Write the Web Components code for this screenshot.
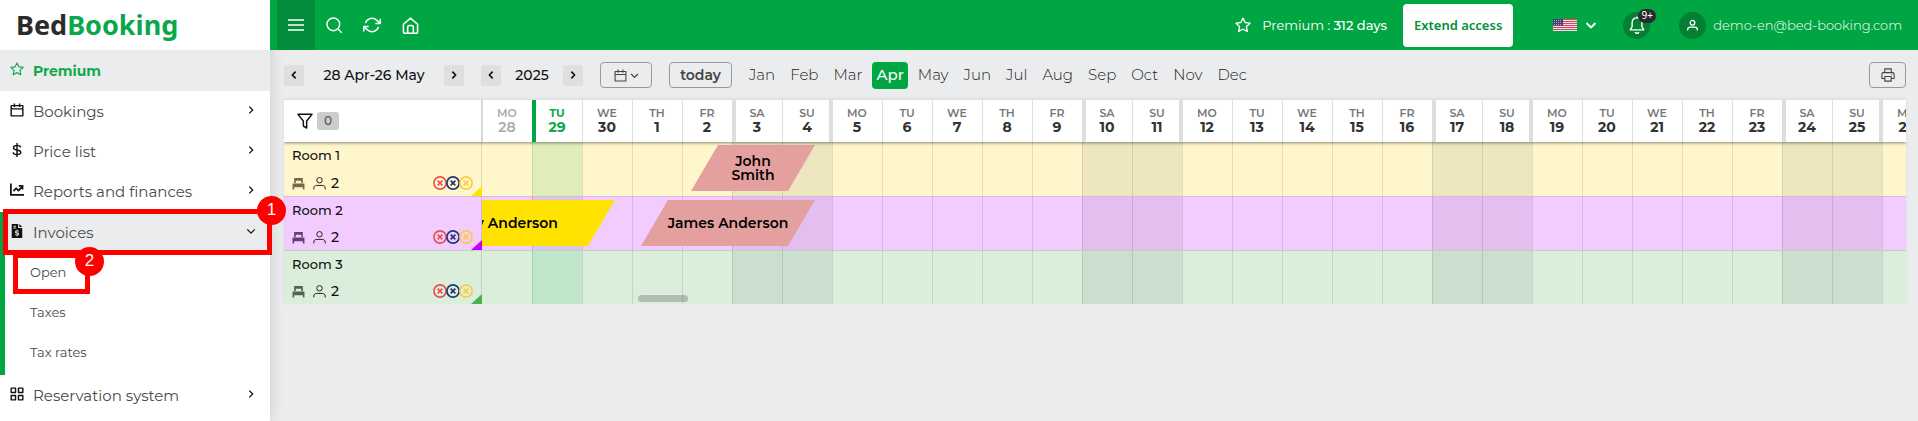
<!DOCTYPE html>
<html lang="en">
<head>
<meta charset="utf-8">
<meta name="viewport" content="width=device-width, initial-scale=1">
<title>BedBooking</title>
<style>
  body { margin: 0; background: #ebecee; font-family: Montserrat, Inter, "Noto Sans", sans-serif; color: #111; }
</style>
</head>
<body>
<app-shell>
  <side-nav slot="nav">
    <nav-item icon="star" tone="premium">Premium</nav-item>
    <nav-item icon="calendar" arrow="right">Bookings</nav-item>
    <nav-item icon="dollar" arrow="right">Price list</nav-item>
    <nav-item icon="chart" arrow="right">Reports and finances</nav-item>
    <nav-group>
      <nav-item icon="invoice" arrow="down" tone="active">Invoices<step-mark slot="mark" kind="row">1</step-mark></nav-item>
      <nav-item tone="sub">Open<step-mark slot="mark" kind="word">2</step-mark></nav-item>
      <nav-item tone="sub">Taxes</nav-item>
      <nav-item tone="sub">Tax rates</nav-item>
    </nav-group>
    <nav-item icon="grid" arrow="right">Reservation system</nav-item>
  </side-nav>
  <top-bar slot="top"></top-bar>
  <date-toolbar slot="tools"></date-toolbar>
  <booking-calendar>
    <room-row label="Room 1" tone="yellow">
      <booking-bar start="4.18" span="2.48">John Smith</booking-bar>
    </room-row>
    <room-row label="Room 2" tone="purple">
      <booking-bar start="-1.82" span="4.48" tone="yellow">Mary Anderson</booking-bar>
      <booking-bar start="3.18" span="3.48">James Anderson</booking-bar>
    </room-row>
    <room-row label="Room 3" tone="green"></room-row>
  </booking-calendar>
</app-shell>

<script>
const ICONS = {
  star: '<path d="M12 1.500l3.200 6.800 7.300 1-5.300 5 1.300 7.500-6.500-3.600-6.500 3.600 1.300-7.500-5.300-5 7.300-1z"/>',
  calendar: '<path d="M2 4.500h20v17.500H2zM2 10h20M7.500 1v6M16.500 1v6"/>',
  dollar: '<path d="M12 0v24M18 7.500C18 5 15.500 4 12 4S6 5.200 6 8s2.500 3.500 6 4 6.500 1.200 6.500 4-3 4-6.500 4-6.500-1.300-6.500-4"/>',
  chart: '<path stroke-width="3" d="M1.500 1v19.500H24M6 14l4.500-5 4 4L20 7M15 5h6.500v6"/>',
  invoice: '<path fill="currentColor" stroke="none" fill-rule="evenodd" d="M3 0h11v7h7v17H3zM16 0l5 5h-5zM6 3v1.500h4V3zM6 6v1.500h4V6zM11.200 10v1.200c-1.700.2-2.700 1.200-2.700 2.500 0 3 4.800 2.200 4.800 3.600 0 1.200-3 1-4.300.1l-.6 1.500c.8.5 1.700.7 2.800.8V21h1.600v-1.300c1.700-.2 2.700-1.200 2.700-2.600 0-3.200-4.800-2.400-4.800-3.700 0-1 2.400-.9 3.800-.2l.6-1.500a6 6 0 0 0-2.300-.5V10z"/>',
  grid: '<path d="M2 2h7.500v7.500H2zM14.500 2H22v7.500h-7.500zM2 14.500h7.500V22H2zM14.500 14.500H22V22h-7.500z"/>',
  right: '<path d="M8 4l8 8-8 8"/>',
  left: '<path d="M16 4l-8 8 8 8"/>',
  down: '<path d="M3 8l9 9 9-9"/>',
  menu: '<path d="M0 4.500h24M0 12h24M0 19.500h24"/>',
  search: '<circle cx="11" cy="11" r="9.500"/><path d="M18 18l5.500 5.500"/>',
  refresh: '<path d="M23 3.500v6.500h-6.500M1 20.500V14h6.500M3.200 9.500a9.200 9.200 0 0 1 15.300-3.600L23 10M1 14l4.500 4.100a9.200 9.200 0 0 0 15.300-3.600"/>',
  home: '<path d="M2 10.200L12 1.500l10 8.700v10.300a2.500 2.500 0 0 1-2.500 2.500h-15A2.500 2.500 0 0 1 2 20.500zM8 23V14.500c0-1.500 1-2.500 2.500-2.500h3c1.500 0 2.500 1 2.500 2.500V23"/>',
  bell: '<path d="M12 2.500c-4.200 0-6.500 3-6.500 7v4.500L3 18.500h18L18.500 14V9.500c0-4-2.300-7-6.500-7zM12 .5v2M9.500 21.500c.5 1.300 1.500 1.500 2.500 1.500s2-.2 2.500-1.500"/>',
  person: '<circle cx="12" cy="6" r="5"/><path d="M1.500 23v-2.500c0-3.500 2.500-5 5.500-5h10c3 0 5.500 1.500 5.500 5V23"/>',
  printer: '<path d="M6.500 8V1.500h11V8M6 18H1.500V10.500C1.500 9 2.500 8 4 8h16c1.500 0 2.500 1 2.500 2.500V18H18M6.500 14.500h11v8h-11zM18 11.500h1.500"/>',
  filter: '<path d="M1.500 2h21l-8 10v10.500l-5-3V12z"/>',
  bed: '<path fill="currentColor" stroke="none" d="M4 2h16v9h-3V7H7v4H4zM1 12h22v7H1zM1 19h3v4H1zM20 19h3v4h-3z"/>',
  blocked: '<circle cx="12" cy="12" r="10.500"/><path d="M8 8l8 8M16 8l-8 8"/>'
};

/* Base for every element: renders its own template into an open root. */
class View extends HTMLElement {
  connectedCallback() {
    if (this.shadowRoot) return;
    const t = document.createElement('template');
    t.innerHTML = '<style>:host,*{box-sizing:border-box}button,a{font:inherit;color:inherit;text-decoration:none;cursor:pointer}button{margin:0;padding:0;border:0;background:none}</style>' + this.view();
    this.attachShadow({ mode: 'open' }).append(t.content.cloneNode(true));
  }
}

customElements.define('ui-icon', class extends View {
  view() {
    const size = this.getAttribute('size') || 14;
    const stroke = this.getAttribute('stroke') || 2;
    return `<style>:host{display:inline-flex;flex:none}svg{display:block}</style>
      <svg aria-hidden="true" width="${size}" height="${size}" viewBox="0 0 24 24" fill="none" stroke="currentColor" stroke-width="${stroke}" stroke-linejoin="round" overflow="visible">${ICONS[this.getAttribute('name')]}</svg>`;
  }
});

customElements.define('app-shell', class extends View {
  view() {
    return `<style>
      :host{display:grid;grid-template-columns:270px minmax(0,1fr);min-height:100vh}
      .side{position:relative;z-index:2;background:#fff;box-shadow:0 0 14px rgba(0,0,0,.14)}
      main{padding:0 12px 0 14px}
      .top{position:relative;z-index:3}
    </style>
    <div class="side"><slot name="nav"></slot></div>
    <div><div class="top"><slot name="top"></slot></div><main><slot name="tools"></slot><slot></slot></main></div>`;
  }
});

customElements.define('side-nav', class extends View {
  view() {
    return `<style>
      :host{display:block}
      .logo{display:flex;align-items:center;height:50px;padding:0 0 0 16px;font:700 27px/36px "Noto Sans",sans-serif;color:#2b2b2b}
      .logo span{color:#0aa84b}
      nav{display:flex;flex-direction:column}
    </style>
    <a class="logo" href="#">Bed<span>Booking</span></a>
    <nav><slot></slot></nav>`;
  }
});

customElements.define('nav-group', class extends View {
  view() {
    return `<style>:host{display:block;position:relative;margin-top:1px;padding-bottom:3px}
      .line{position:absolute;z-index:1;inset:0 auto 0 0;width:5px;background:#00a642}</style>
      <slot></slot><div class="line"></div>`;
  }
});

customElements.define('nav-item', class extends View {
  view() {
    const icon = this.getAttribute('icon'), arrow = this.getAttribute('arrow');
    return `<style>
      :host{display:block;position:relative;font-size:15px;line-height:20px;color:#4a4a4a}
      a{display:flex;align-items:center;gap:9px;height:40px;padding:1px 14px 0 10px}
      ui-icon{margin-bottom:4px;color:#111}
      .label{flex:1}
      :host([tone=premium]){background:#ebecee;color:#12a84b;font-size:14px;font-weight:700}
      :host([tone=premium]) ui-icon{color:#12a84b}
      :host([tone=premium]) a{height:41px}
      :host([tone=active]) a{background:#ebecee}
      :host([tone=sub]){font-size:13px}
      :host([tone=sub]) a{padding:0 14px 0 30px}
    </style>
    <a href="#">${icon ? `<ui-icon name="${icon}" size="14" stroke="${icon === 'star' ? 2 : 2.4}"></ui-icon>` : ''}<span class="label"><slot></slot></span>${arrow ? `<ui-icon name="${arrow}" size="10" stroke="3"></ui-icon>` : ''}</a>
    <slot name="mark"></slot>`;
  }
});

/* Numbered red frame laid over a navigation entry. */
customElements.define('step-mark', class extends View {
  view() {
    return `<style>
      :host{position:absolute;z-index:4;border:5px solid #f00;pointer-events:none}
      :host([kind=row]){inset:-3px -2px -3px 3px}
      :host([kind=word]){inset:1px 180px -2px 13px}
      b{position:absolute;top:-18px;right:-19px;width:29px;height:29px;border-radius:50%;background:#f00;color:#fff;font:400 17px/28px "Liberation Sans",sans-serif;text-align:center}
      :host([kind=word]) b{top:-11px}
    </style><b><slot></slot></b>`;
  }
});

customElements.define('top-bar', class extends View {
  view() {
    return `<style>
      :host{display:flex;align-items:center;height:50px;padding:0 16px 0 7px;background:#00a642;color:#fff;font-size:13px;line-height:20px}
      button,a,.disc{display:flex;align-items:center;justify-content:center}
      .menu{width:38px;height:50px;background:#048c3a}
      .tool{width:38px;height:50px}
      .gap{flex:1}
      .plan{gap:11px;margin-right:16px}
      .plan strong{font-weight:500}
      .extend{height:43px;padding:0 11px;margin-right:40px;border-radius:4px;background:#fff;color:#00913a;font:600 13px/20px "Noto Sans",sans-serif}
      .lang{gap:8px;margin-right:26px}
      .disc{position:relative;width:27px;height:27px;border-radius:50%;background:#047f34}
      .bell{margin-right:29px}
      .count{position:absolute;left:15px;top:-3px;width:18px;height:14px;border-radius:7px;background:#2b2b2b;font:400 10px/13px "Noto Sans",sans-serif;text-align:center}
      .user{gap:7px;font-weight:300}
    </style>
    <button class="menu" aria-label="Menu"><ui-icon name="menu" size="16" stroke="2.2"></ui-icon></button>
    <button class="tool" aria-label="Search"><ui-icon name="search" size="16" stroke="2.2"></ui-icon></button>
    <button class="tool" aria-label="Refresh"><ui-icon name="refresh" size="18"></ui-icon></button>
    <button class="tool" aria-label="Home"><ui-icon name="home" size="17" stroke="2.2"></ui-icon></button>
    <div class="gap"></div>
    <a class="plan" href="#"><ui-icon name="star" size="16"></ui-icon><span>Premium : <strong>312 days</strong></span></a>
    <a class="extend" href="#">Extend access</a>
    <button class="lang" aria-label="Language">
      <svg width="24" height="12" viewBox="0 0 24 12"><path fill="#f3dfe3" d="M0 0h24v12H0z"/><path stroke="#cf4a5c" d="M0 .5h24M0 2.500h24M0 4.500h24M0 6.500h24M0 8.500h24M0 10.500h24"/><path fill="#3f3f78" d="M0 0h10v6.500H0z"/><path stroke="#a9a9cc" stroke-dasharray="1 1" d="M1 1.500h8M1 3.500h8M1 5.500h8"/></svg>
      <ui-icon name="down" size="12" stroke="3.600"></ui-icon>
    </button>
    <button class="disc bell" aria-label="Notifications"><ui-icon name="bell" size="18" stroke="1.900"></ui-icon><span class="count">9+</span></button>
    <a class="user" href="#"><span class="disc"><ui-icon name="person" size="11" stroke="2.800"></ui-icon></span>demo-en@bed-booking.com</a>`;
  }
});

customElements.define('date-toolbar', class extends View {
  view() {
    const months = 'Jan Feb Mar Apr May Jun Jul Aug Sep Oct Nov Dec'.split(' ');
    const step = (dir, label) => `<button class="step" aria-label="${label}"><ui-icon name="${dir}" size="10" stroke="4"></ui-icon></button>`;
    return `<style>
      :host{display:flex;align-items:center;gap:17px;height:50px;font-size:14px;line-height:20px}
      .pager,.months,button{display:flex;align-items:center;justify-content:center}
      .step{width:20px;height:21px;border-radius:3px;background:#dedfe0}
      .pager span{text-align:center;font-weight:500}
      .range{width:140px}.year{width:62px}
      .box{height:26px;border:1px solid #999;border-radius:4px;color:#444}
      .pick{width:52px;gap:3px}
      .today{width:63px;font-weight:600}
      .months{gap:5px;margin-left:-5px;font-size:15px}
      .months button{height:27px;padding:0 5px;border-radius:4px;color:#222;font-weight:300}
      .months .on{background:#00a642;color:#fff;font-weight:500;padding:0 4px}
      .print{width:37px;margin-left:auto}
    </style>
    <div class="pager">${step('left', 'Previous period')}<span class="range">28 Apr-26 May</span>${step('right', 'Next period')}</div>
    <div class="pager">${step('left', 'Previous year')}<span class="year">2025</span>${step('right', 'Next year')}</div>
    <button class="box pick" aria-label="Choose date"><ui-icon name="calendar" size="13"></ui-icon><ui-icon name="down" size="9" stroke="3.500"></ui-icon></button>
    <button class="box today">today</button>
    <div class="months">${months.map(m => `<button class="${m === 'Apr' ? 'on' : ''}">${m}</button>`).join('')}</div>
    <button class="box print" aria-label="Print"><ui-icon name="printer" size="14" stroke="1.900"></ui-icon></button>`;
  }
});

const DAYS = Array.from({ length: 29 }, (_, i) => {
  const d = new Date(2025, 3, 28 + i);
  const name = ['SU', 'MO', 'TU', 'WE', 'TH', 'FR', 'SA'][d.getDay()];
  return { name, num: d.getDate(), cls: [name.toLowerCase(), i === 0 ? 'past' : '', i === 1 ? 'now' : ''].join(' ') };
});

customElements.define('booking-calendar', class extends View {
  view() {
    return `<style>
      :host{display:block;position:relative;overflow:hidden;--day:50px;--side:198px;box-shadow:0 -1px 3px rgba(0,0,0,.08)}
      .head{display:flex;position:relative;z-index:2;height:42px;background:#fff;box-shadow:0 1px 3px rgba(0,0,0,.45)}
      .corner{flex:none;width:var(--side);display:flex;align-items:center;gap:4px;padding-left:13px;border-right:1px solid #d0d0d0}
      .corner button{display:flex}
      .badge{width:22px;height:18px;border-radius:3px;background:#ccc;color:#555;font-size:12px;line-height:18px;font-weight:500;text-align:center}
      .days{display:flex;flex:1;min-width:0;overflow:hidden}
      .day{flex:none;width:var(--day);padding-top:6px;text-align:center;font-size:14px;line-height:15px;font-weight:700;color:#333;box-shadow:inset 1px 0 #dedede}
      .day span{display:block;font-size:11px;line-height:14px;font-weight:600;color:#777}
      .sa{box-shadow:inset 4px 0 #dedede}
      .su{box-shadow:inset 1px 0 #dedede,inset -3px 0 #dedede}
      .past,.past span{color:#aaa;font-weight:600}
      .now{box-shadow:inset 4px 0 #00a642}
      .now,.now span{color:#12a84b;font-weight:700}
      .thumb{position:absolute;left:calc(var(--side) + 156px);bottom:2px;width:50px;height:7px;border-radius:4px;background:rgba(0,0,0,.2)}
    </style>
    <div class="head">
      <div class="corner"><button aria-label="Filter"><ui-icon name="filter" size="16" stroke="2.200"></ui-icon></button><span class="badge">0</span></div>
      <div class="days">${DAYS.map(d => `<div class="day ${d.cls}"><span>${d.name}</span>${d.num}</div>`).join('')}</div>
    </div>
    <slot></slot>
    <div class="thumb"></div>`;
  }
});

customElements.define('room-row', class extends View {
  view() {
    return `<style>
      :host{display:flex;height:54px;border-bottom:1px solid var(--line);background:var(--fill);overflow:hidden}
      :host([tone=yellow]){height:55px;--fill:#fff6cb;--flag:#ffe200;--line:#d9b6e4;--bed:#736b45}
      :host([tone=purple]){--fill:#f3ccff;--flag:#c800ff;--line:#bed2c2;--bed:#653f72}
      :host([tone=green]){height:53px;border:0;--fill:#dbeedc;--flag:#4caf50;--bed:#506552}
      .room{position:relative;flex:none;display:flex;flex-direction:column;justify-content:space-between;width:var(--side);padding:3px 8px 3px 8px;font-size:13px;line-height:20px;font-weight:500;border-right:1px solid rgba(0,0,0,.12)}
      .room::after{content:"";position:absolute;right:-1px;bottom:0;width:11px;height:10px;background:var(--flag);clip-path:polygon(100% 0,100% 100%,0 100%)}
      .meta{display:flex;align-items:center;gap:5px;font-size:14px}
      .bed{color:var(--bed);margin-right:3px}
      .sync{display:flex;margin-left:auto}
      .sync ui-icon+ui-icon{margin-left:-1px}
      .track{position:relative;display:flex;flex:1;min-width:0;overflow:hidden}
      .cell{flex:none;width:var(--day);box-shadow:inset 1px 0 rgba(0,0,0,.1)}
      .cell:first-child{box-shadow:none}
      .sa,.su{background:rgba(0,20,20,.065)}
      .now{background:rgba(0,166,66,.12)}
      .red{color:#e65050}.navy{color:#1f3a78}.gold{color:#ffcb3d}
    </style>
    <div class="room">
      <div>${this.getAttribute('label')}</div>
      <div class="meta"><ui-icon class="bed" name="bed" size="13"></ui-icon><ui-icon name="person" size="13" stroke="1.700"></ui-icon><span>2</span>
        <span class="sync"><ui-icon class="red" name="blocked" size="14" stroke="2.800"></ui-icon><ui-icon class="navy" name="blocked" size="14" stroke="3"></ui-icon><ui-icon class="gold" name="blocked" size="14" stroke="2.800"></ui-icon></span>
      </div>
    </div>
    <div class="track">${DAYS.map(d => `<div class="cell ${d.cls}"></div>`).join('')}<slot></slot></div>`;
  }
});

/* A stay on the timeline; start and span are counted in days. */
customElements.define('booking-bar', class extends View {
  view() {
    return `<style>
      :host{position:absolute;top:3px;height:46px;left:calc(var(--day) * ${this.getAttribute('start')});width:calc(var(--day) * ${this.getAttribute('span')});display:flex;align-items:center;justify-content:center;padding:0 25px;background:#e4a09f;clip-path:polygon(27px 0,100% 0,calc(100% - 27px) 100%,0 100%);font-size:14px;line-height:14px;font-weight:600;text-align:center;color:#000}
      :host([tone=yellow]){background:#ffe200}
    </style><slot></slot>`;
  }
});
</script>
</body>
</html>
